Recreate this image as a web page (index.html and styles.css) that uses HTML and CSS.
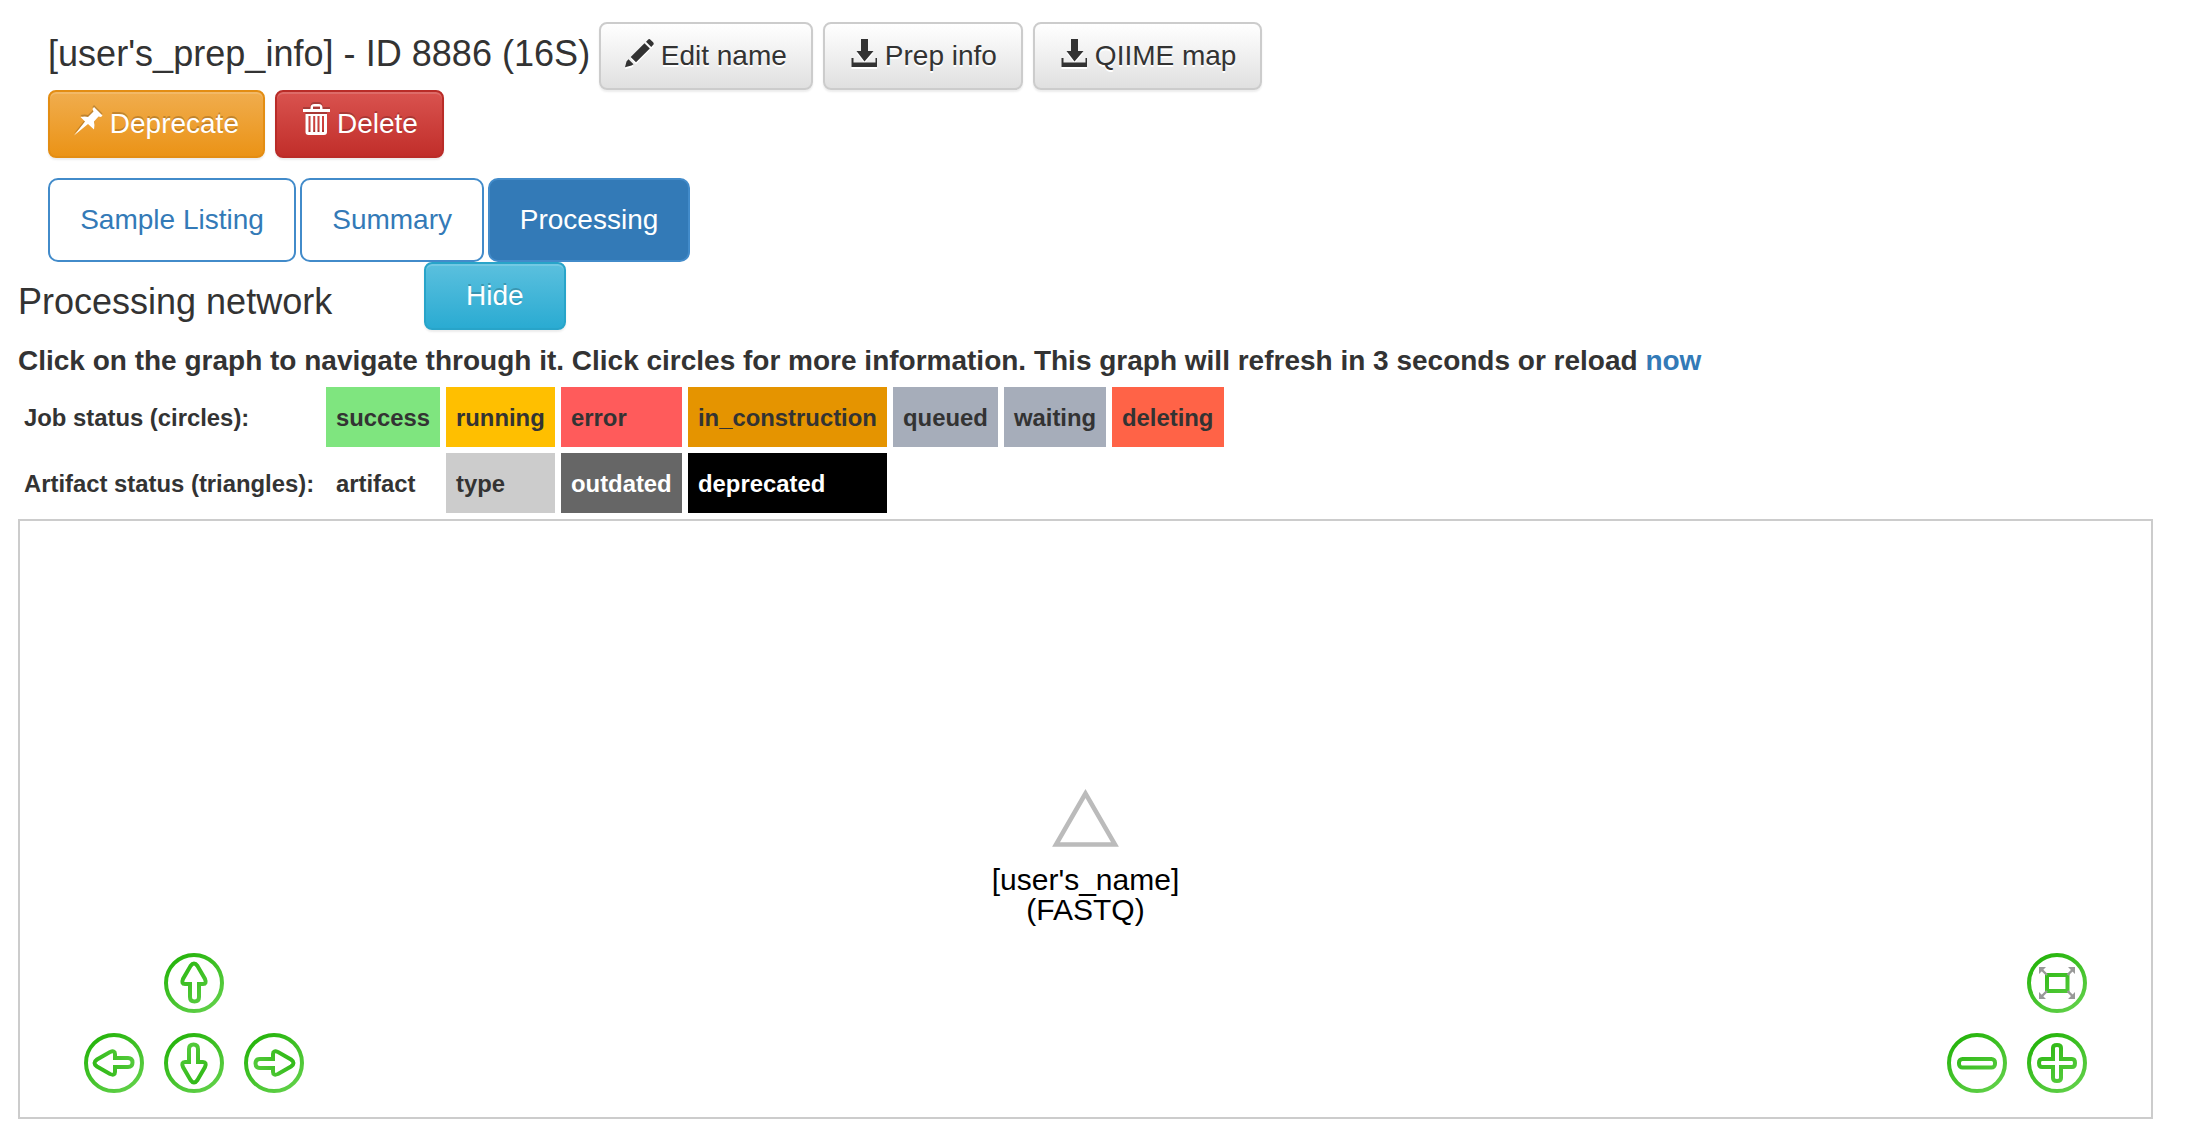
FILE: index.html
```html
<!DOCTYPE html>
<html lang="en">
<head>
<meta charset="utf-8">
<title>Processing network</title>
<link rel="stylesheet" href="styles.css">
</head>
<body>
<svg class="defs" aria-hidden="true">
  <defs>
    <linearGradient id="green" gradientUnits="userSpaceOnUse" x1="12" y1="6" x2="46" y2="58">
      <stop offset="0" stop-color="#27b50d"/><stop offset="1" stop-color="#60d048"/>
    </linearGradient>
    <symbol id="save" viewBox="0 0 28 28">
      <path d="M12 0h7v12h5.500L15.500 22.500 7.500 12H12zM2.500 19h2v4.500h22V19h2v9h-26z"/>
    </symbol>
    <symbol id="arrow" viewBox="0 0 60 60">
      <path d="M26 31h-5q-4 0-2-5L26.500 13q3.500-5 7 0L41 26q2 5-2 5h-4V44q0 4.500-4.500 4.500T26 44V31z"/>
    </symbol>
  </defs>
</svg>
<header class="prep">
  <h4 class="title">[user's_prep_info] - ID 8886 (16S)</h4>
  <a class="btn"><svg class="icon" viewBox="0 0 28 28"><path d="M23.500.3q1-.6 2 .4l2.600 2.600q1 1.200.4 2.200L26.200 8 21 2.800zM19.500 4.200L24.800 9.500 11 23.300 5.700 18zM3.500 20.300L8.500 25.300 6.500 26.500 0 28.300 1.500 22.500z"/></svg> Edit name</a>
  <a class="btn"><svg class="icon save"><use href="#save"/></svg> Prep info</a>
  <a class="btn"><svg class="icon save"><use href="#save"/></svg> QIIME map</a>
</header>
<div class="actions">
  <a class="btn warning"><svg class="icon" viewBox="0 0 28 28"><path d="M20 0L28.500 8.500 27 10 24.500 9.500 20 14.500Q21 18 20 22.500L14 17 0 28.500 11 14.500 6.500 10Q11 9 14 10L19.500 4.500 18.500 2z"/></svg> Deprecate</a>
  <a class="btn danger"><svg class="icon" viewBox="0 0 28 30"><path fill-rule="evenodd" d="M9.500 3q0-4 4-4h4q4 0 4 4v1H29v3H2V4h7.500zm2.500 1h7V1.500h-7zM4.500 9H26v18q0 3-3 3H7.500q-3 0-3-3zm3 2v16h2V11zm4.700 0v16h2V11zm4.300 0v16h2V11zm4.500 0v16h2V11z"/></svg> Delete</a>
</div>
<nav class="tabs">
  <a class="tab">Sample Listing</a>
  <a class="tab">Summary</a>
  <a class="tab active">Processing</a>
</nav>
<main class="processing">
  <div class="network-head">
    <h4 class="title">Processing network</h4>
    <a class="btn info">Hide</a>
  </div>
  <p class="help">Click on the graph to navigate through it. Click circles for more information. This graph will refresh in 3 seconds or reload <a class="link">now</a></p>
  <table class="legend">
    <colgroup>
      <col class="w-label"><col class="w-success"><col class="w-running"><col class="w-error"><col class="w-construction"><col class="w-queued"><col class="w-waiting"><col class="w-deleting">
    </colgroup>
    <tr>
      <td class="label">Job status (circles):</td>
      <td class="success">success</td><td class="running">running</td><td class="error">error</td>
      <td class="construction">in_construction</td><td class="queued">queued</td><td class="queued">waiting</td><td class="deleting">deleting</td>
    </tr>
    <tr>
      <td class="label">Artifact status (triangles):</td>
      <td>artifact</td><td class="type">type</td><td class="outdated">outdated</td><td class="deprecated">deprecated</td>
    </tr>
  </table>
  <section class="canvas">
    <div class="node">
      <svg class="triangle" viewBox="0 0 67 58"><path d="M33.500 4.500L4 55.500h59z"/></svg>
      <div>[user's_name]</div>
      <div>(FASTQ)</div>
    </div>
    <svg class="nav up" viewBox="0 0 60 60"><circle cx="30" cy="30" r="28"/><use href="#arrow"/></svg>
    <svg class="nav left" viewBox="0 0 60 60"><circle cx="30" cy="30" r="28"/><use href="#arrow" transform="rotate(-90 30 30)"/></svg>
    <svg class="nav down" viewBox="0 0 60 60"><circle cx="30" cy="30" r="28"/><use href="#arrow" transform="rotate(180 30 30)"/></svg>
    <svg class="nav right" viewBox="0 0 60 60"><circle cx="30" cy="30" r="28"/><use href="#arrow" transform="rotate(90 30 30)"/></svg>
    <svg class="nav fit" viewBox="0 0 60 60"><circle cx="30" cy="30" r="28"/><rect x="20" y="22" width="20.500" height="16"/><path class="gray" d="M20 22l-6-6M40.500 22l6-6M20 38l-6 6M40.500 38l6 6"/><path class="heads" d="M12 14h7l-7 7zM48 14h-7l7 7zM12 46h7l-7-7zM48 46h-7l7-7z"/></svg>
    <svg class="nav minus" viewBox="0 0 60 60"><circle cx="30" cy="30" r="28"/><rect x="12" y="26" width="36" height="8.500" rx="3.500"/></svg>
    <svg class="nav plus" viewBox="0 0 60 60"><circle cx="30" cy="30" r="28"/><path d="M26 26V15q0-3 4-3t4 3v11H45q3 0 3 4t-3 4H34V45q0 3-4 3t-4-3V34H15q-3 0-3-4t3-4z"/></svg>
  </section>
</main>
</body>
</html>
```
FILE: styles.css
```css
* { box-sizing: border-box; }
body {
  margin: 0;
  padding: 22px 45px 0 18px;
  font: 28px/40px "Liberation Sans", Arial, sans-serif;
  color: #333;
  background: #fff;
}
.defs { position: absolute; width: 0; height: 0; }
.prep, .actions { display: flex; gap: 10.2px; margin-left: 30px; height: 68px; white-space: nowrap; }
.title { margin: 0; font-size: 36px; font-weight: 400; line-height: 40px; }
.prep .title { width: 540.8px; padding-top: 12px; letter-spacing: .03px; }
.btn {
  display: inline-block;
  height: 68px;
  padding: 12px 24px;
  border: 2px solid #ccc;
  border-radius: 8px;
  background: linear-gradient(#fff, #e0e0e0);
  box-shadow: inset 0 2px 0 rgba(255,255,255,.15), 0 2px 2px rgba(0,0,0,.075);
  text-shadow: 0 2px 0 #fff;
}
.icon { width: 28px; height: 28px; fill: currentColor; vertical-align: -2px; overflow: visible; filter: drop-shadow(0 2px 0 #fff); }
.warning, .danger, .info { color: #fff; text-shadow: 0 -2px 0 rgba(0,0,0,.2); }
.warning .icon, .danger .icon { filter: drop-shadow(0 -2px 0 rgba(0,0,0,.2)); }
.danger .icon { height: 30px; }
.warning { background: linear-gradient(#f0ad4e, #eb9316); border-color: #e38d13; }
.danger { background: linear-gradient(#d9534f, #c12e2a); border-color: #b92c28; }
.info { background: linear-gradient(#5bc0de, #2aabd2); border-color: #28a4c9; padding: 12px 40px; }
.tabs { display: flex; gap: 4px; margin: 20px 0 0 30px; }
.tab { height: 84px; padding: 20px 30.2px; border: 2px solid #428bca; border-radius: 10px; color: #337ab7; }
.tab.active { padding: 20px 29.6px; background: #337ab7; color: #fff; }
.network-head { display: flex; height: 68px; }
.network-head .title { width: 406px; padding-top: 20px; }
.help { margin: 11px 0 0; font-weight: 700; white-space: nowrap; }
.link { color: #337ab7; }
.legend { width: 1212px; table-layout: fixed; border-spacing: 6px; font-size: 23.85px; font-weight: 700; line-height: 40px; white-space: nowrap; }
.legend td { height: 60px; padding: 11px 0 9px 10px; }
.legend .label { padding-left: 0; }
.w-label { width: 296px; }
.w-success { width: 114px; }
.w-running { width: 109px; }
.w-error { width: 121px; }
.w-construction { width: 199px; }
.w-queued { width: 105px; }
.w-waiting { width: 102px; }
.w-deleting { width: 112px; }
.success { background: #7fe57f; }
.running { background: #ffbf00; }
.error { background: #ff5b5b; }
.construction { background: #e59400; }
.queued { background: #a6adba; }
.deleting { background: #ff6347; }
.type { background: #ccc; }
.outdated { background: #666; color: #fff; }
.deprecated { background: #000; color: #fff; }
.canvas { position: relative; height: 600px; border: 2px solid #ccc; }
.node { position: absolute; left: 50%; top: 268px; width: 200px; margin-left: -100px; text-align: center; font-size: 30px; line-height: 30px; color: #000; }
.triangle { display: block; width: 67px; height: 58px; margin: 0 auto 18px; fill: none; stroke: #bbb; stroke-width: 4.5; }
.nav { position: absolute; width: 60px; height: 60px; fill: none; stroke: url(#green); stroke-width: 4; }
.nav .gray { stroke: #999; stroke-width: 2.4; }
.nav .heads { stroke: none; fill: #999; }
.up { left: 144px; top: 432px; }
.left { left: 64px; top: 512px; }
.down { left: 144px; top: 512px; }
.right { left: 224px; top: 512px; }
.fit { right: 64px; top: 432px; }
.minus { right: 144px; top: 512px; }
.plus { right: 64px; top: 512px; }
```
